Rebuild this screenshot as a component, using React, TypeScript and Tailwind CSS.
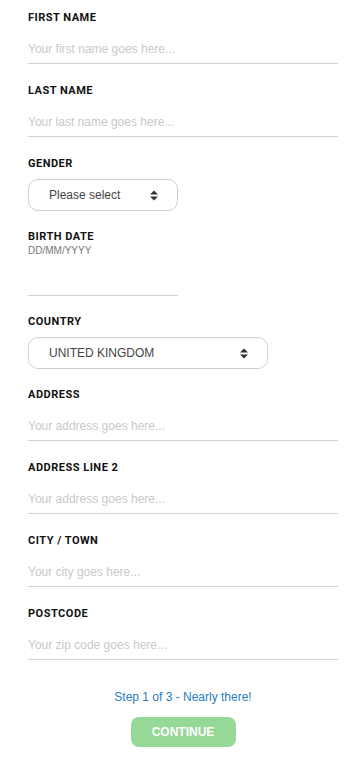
const labelCls = "block h-[14px] text-[11px] leading-[14px] font-bold tracking-[0.5px] text-[#111] font-['Roboto',sans-serif]"

function Arrows() {
    return (
        <svg width="8" height="11" viewBox="0 0 8 11" className="shrink-0">
            <path d="M0 4.5 L4 0.5 L8 4.5 Z" fill="#333" />
            <path d="M0 6.5 L4 10.5 L8 6.5 Z" fill="#333" />
        </svg>
    )
}

function TextField({ label, placeholder }: { label: string; placeholder: string }) {
    return (
        <div className="mb-[20px]">
            <label className={labelCls}>{label}</label>
            <input
                placeholder={placeholder}
                className="mt-[9px] block h-[30px] w-full border-b border-[#d2d2d2] bg-transparent text-[12px] text-[#333] outline-none placeholder:text-[#c9c9c9] font-['Liberation_Sans',Arial,sans-serif]"
            />
        </div>
    )
}

function SelectField({ label, value, width }: { label: string; value: string; width: string }) {
    return (
        <div className="mb-[19px]">
            <label className={labelCls}>{label}</label>
            <div className={`mt-[8px] flex h-[32px] items-center justify-between rounded-[10px] border border-[#cfcfcf] pl-[20px] pr-[19px] ${width}`}>
                <span className="text-[12px] text-[#444] font-['Liberation_Sans',Arial,sans-serif]">{value}</span>
                <Arrows />
            </div>
        </div>
    )
}

export default function App() {
    return (
        <div className="min-h-screen bg-white">
            <form className="px-[28px] pt-[11px] pr-[23px]" onSubmit={(e) => e.preventDefault()}>
                <TextField label="FIRST NAME" placeholder="Your first name goes here..." />
                <TextField label="LAST NAME" placeholder="Your last name goes here..." />

                <SelectField label="GENDER" value="Please select" width="w-[150px]" />

                {/* Birth date */}
                <div className="mb-[19px]">
                    <label className={labelCls}>BIRTH DATE</label>
                    <p className="mt-[2px] h-[10px] text-[10px] leading-[10px] text-[#777] font-['Liberation_Sans',Arial,sans-serif]">DD/MM/YYYY</p>
                    <input className="mt-[10px] block h-[30px] w-[150px] border-b border-[#d2d2d2] outline-none" />
                </div>

                <SelectField label="COUNTRY" value="UNITED KINGDOM" width="w-[240px]" />

                <TextField label="ADDRESS" placeholder="Your address goes here..." />
                <TextField label="ADDRESS LINE 2" placeholder="Your address goes here..." />
                <TextField label="CITY / TOWN" placeholder="Your city goes here..." />
                <TextField label="POSTCODE" placeholder="Your zip code goes here..." />

                <div className="mt-[29px] flex flex-col items-center">
                    <p className="h-[16px] text-[12px] leading-[16px] text-[#2a7dc2] font-['Liberation_Sans',Arial,sans-serif]">Step 1 of 3 - Nearly there!</p>
                    <button className="mt-[12px] h-[30px] w-[105px] rounded-[8px] bg-[#96d896] text-[12px] font-bold text-white font-['Liberation_Sans',Arial,sans-serif]">
                        CONTINUE
                    </button>
                </div>
            </form>
        </div>
    )
}
